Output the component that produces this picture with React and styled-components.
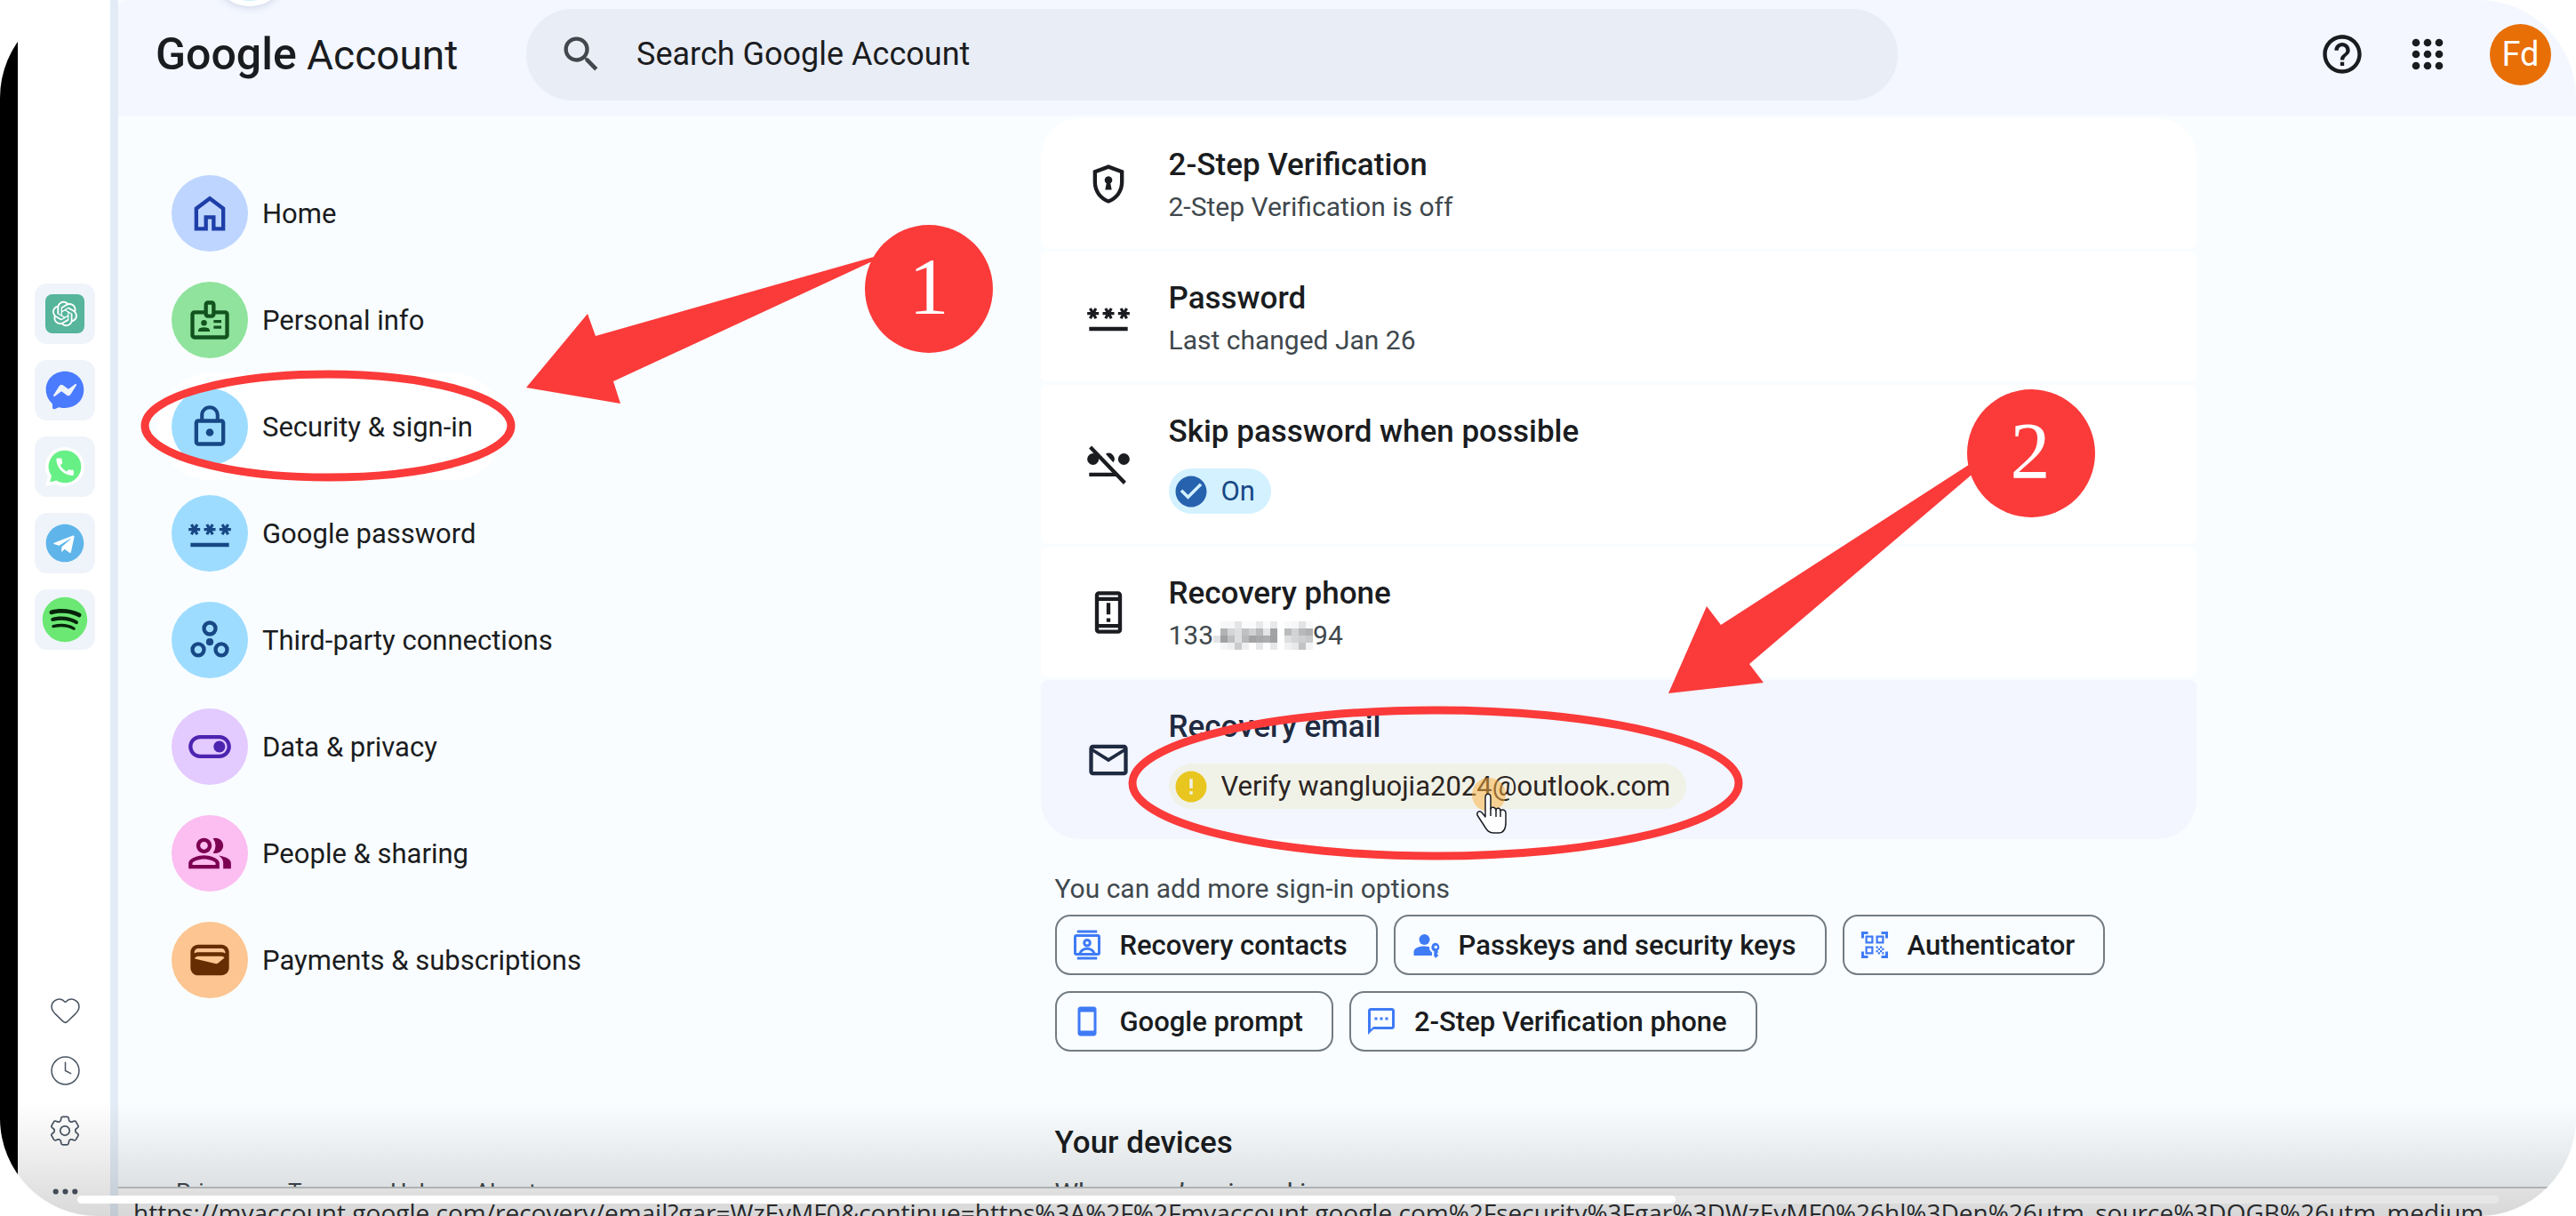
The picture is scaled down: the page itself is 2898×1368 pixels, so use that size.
import React from "react";
import styled, { createGlobalStyle } from "styled-components";
import {
  MdOutlineBadge,
  MdLockOutline,
  MdPassword,
  MdOutlineToggleOn,
  MdOutlinePeopleAlt,
  MdWallet,
  MdOutlineSecurityUpdateWarning,
  MdMailOutline,
  MdStayCurrentPortrait,
  MdOutlineTextsms,
  MdQrCodeScanner,
  MdHelpOutline,
  MdSearch,
  MdCheckCircle,
  MdError,
} from "react-icons/md";
import { RiOpenaiFill } from "react-icons/ri";
import { FaFacebookMessenger, FaTelegram, FaSpotify } from "react-icons/fa";
import { HiOutlineCog6Tooth } from "react-icons/hi2";
import { Heart, Clock4, Ellipsis } from "lucide-react";

/* icons that the packs do not have */

const WhatsAppIcon = () => (
  <svg viewBox="0 0 24 24">
    <path d="M12 0a12 12 0 0 1 0 24c-2 0-4-.5-5.700-1.400L0 24l1.600-6A12 12 0 0 1 12 0z" fill="#fff" />
    <path d="M12 2a10 10 0 0 1 0 20c-2 0-3.800-.5-5.300-1.500L2.800 21.500l1-3.800A10 10 0 0 1 12 2z" fill="#67f086" />
    <path
      d="M20.010 15.380c-1.230 0-2.420-.2-3.530-.56-.35-.12-.74-.03-1.010.24l-1.570 1.970c-2.830-1.350-5.480-3.900-6.890-6.830l1.950-1.660c.27-.28.35-.67.24-1.020-.37-1.110-.56-2.300-.56-3.530 0-.54-.45-.99-.99-.99H4.190C3.650 3 3 3.240 3 3.990 3 13.280 10.730 21 20.010 21c.71 0 .99-.63.99-1.180v-3.450c0-.54-.45-.99-.99-.99z"
      fill="#fff"
      transform="translate(5 5) scale(0.590)"
    />
  </svg>
);

const HomeIcon = () => (
  <svg viewBox="0 0 24 24" fill="currentColor">
    <path d="M6 19h3v-6h6v6h3v-9l-6-4.5L6 10v9zm-2 2V9l8-6 8 6v12h-7v-6h-2v6H4z" />
  </svg>
);

const ConnectionsIcon = () => (
  <svg viewBox="0 0 24 24" fill="none" stroke="currentColor" strokeWidth="2">
    <circle cx="12" cy="6" r="3" />
    <circle cx="6" cy="17" r="3" />
    <circle cx="18" cy="17" r="3" />
    <circle cx="12" cy="13" r="1.9" fill="currentColor" stroke="none" />
  </svg>
);

const ShieldKeyIcon = () => (
  <svg viewBox="0 0 24 24" fill="currentColor">
    <path d="M12 2 4 5v6.1c0 5 3.4 9.7 8 10.9 4.600-1.200 8-5.900 8-10.900V5l-8-3zm6 9.100c0 4-2.550 7.700-6 8.830-3.450-1.130-6-4.820-6-8.830V6.390l6-2.250 6 2.250v4.710z" />
    <path d="M10.300 15h3.400l-.65-3.300a2 2 0 1 0-2.100 0L10.300 15z" />
  </svg>
);

const SkipPasswordIcon = () => (
  <svg viewBox="0 0 24 24" fill="currentColor">
    <circle cx="4" cy="9" r="3" />
    <circle cx="20" cy="9" r="3" />
    <path d="M10.600 6.300A3 3 0 0 1 14.500 10.700z" />
    <path d="M2 16h12.600l2 2H2z" />
    <path d="m1.900 3.500 1.400-1.400 17.900 18.600-1.400 1.400z" />
  </svg>
);

const ContactsIcon = () => (
  <svg viewBox="0 0 24 24" fill="none" stroke="currentColor" strokeWidth="2">
    <path d="M4.500 2h15M4.500 22h15" />
    <rect x="3" y="5" width="18" height="14" rx="1" />
    <circle cx="12" cy="10.500" r="2.200" />
    <path d="M6.500 18.500c1-2.600 3.200-3.700 5.500-3.700s4.500 1.100 5.500 3.700" />
  </svg>
);

const PasskeyIcon = () => (
  <svg viewBox="0 0 24 24" fill="currentColor">
    <circle cx="11" cy="8" r="4" />
    <path d="M3 20v-2.800c0-3 4.500-4.200 8-4.200 1.300 0 2.600.2 3.700.5-.2 1.800.6 3.300 2 4.100V20z" />
    <path
      fillRule="evenodd"
      d="M19.500 10.500a3.300 3.300 0 0 0-1.300 6.300V20.500l1.300 1.300 2-2-1.200-1.300 1.200-1.200-.8-.8a3.300 3.300 0 0 0-1.200-6zm0 2a1.200 1.200 0 1 1 0 2.400 1.200 1.200 0 0 1 0-2.400z"
    />
  </svg>
);

const AppsIcon = () => (
  <svg viewBox="0 0 24 24" fill="currentColor">
    {[6, 12, 18].map((cy) =>
      [6, 12, 18].map((cx) => <circle key={cx + "-" + cy} cx={cx} cy={cy} r="2" />)
    )}
  </svg>
);

const rail = [
  { name: "ChatGPT", kind: "square", bg: "#56b59a", color: "#fff", icon: <RiOpenaiFill /> },
  { name: "Messenger", kind: "plain", color: "#4a7bff", icon: <FaFacebookMessenger /> },
  { name: "WhatsApp", kind: "plain", color: "#67f086", icon: <WhatsAppIcon /> },
  { name: "Telegram", kind: "disc", color: "#5fb5ea", under: "#fff", icon: <FaTelegram /> },
  { name: "Spotify", kind: "disc", color: "#6be873", under: "#06240a", large: true, icon: <FaSpotify /> },
];

const navItems = [
  { label: "Home", bg: "#bed5ff", color: "#1e3ea8", icon: <HomeIcon /> },
  { label: "Personal info", bg: "#8fe39c", color: "#12521f", icon: <MdOutlineBadge /> },
  { label: "Security & sign-in", bg: "#9edcff", color: "#174885", icon: <MdLockOutline />, active: true },
  { label: "Google password", bg: "#9edcff", color: "#174885", icon: <MdPassword /> },
  { label: "Third-party connections", bg: "#9edcff", color: "#174885", icon: <ConnectionsIcon /> },
  { label: "Data & privacy", bg: "#e3caff", color: "#4c24b0", icon: <MdOutlineToggleOn /> },
  { label: "People & sharing", bg: "#fcbdf0", color: "#7c0052", icon: <MdOutlinePeopleAlt /> },
  { label: "Payments & subscriptions", bg: "#fcc591", color: "#662d02", icon: <MdWallet /> },
];

const options = [
  { label: "Recovery contacts", icon: <ContactsIcon /> },
  { label: "Passkeys and security keys", icon: <PasskeyIcon /> },
  { label: "Authenticator", icon: <MdQrCodeScanner /> },
  { label: "Google prompt", icon: <MdStayCurrentPortrait /> },
  { label: "2-Step Verification phone", icon: <MdOutlineTextsms /> },
];

// grey levels of the blurred digits, one row per line of blocks, 0 is empty
const blocks = [
  [0, 246, 246, 228, 250, 250, 232, 250, 232, 0, 248, 246, 226, 248],
  [0, 178, 212, 222, 192, 208, 184, 228, 162, 0, 186, 210, 184, 176],
  [226, 160, 190, 222, 184, 162, 168, 172, 160, 0, 222, 212, 206, 200],
  [0, 244, 238, 202, 238, 0, 230, 0, 230, 0, 240, 232, 194, 242],
];

const statusUrl =
  "https://myaccount.google.com/recovery/email?gar=WzEyMF0&continue=https%3A%2F%2Fmyaccount.google.com%2Fsecurity%3Fgar%3DWzEyMF0%26hl%3Den%26utm_source%3DOGB%26utm_medium";

const HiddenDigits = () => (
  <svg width="112" height="32" viewBox="0 0 14 4" shapeRendering="crispEdges">
    {blocks.map((row, y) =>
      row.map((g, x) =>
        g ? (
          <rect key={x + "-" + y} x={x} y={y} width="1" height="1" fill={`rgb(${g},${g + 1},${g + 2})`} />
        ) : null
      )
    )}
  </svg>
);

const Annotations = () => (
  <Overlay width="2898" height="1368" viewBox="0 0 2898 1368">
    <g fill="none" stroke="#fb3a3a" strokeWidth="9">
      <ellipse cx="369" cy="479" rx="206" ry="58" />
      <ellipse cx="1615" cy="881" rx="341" ry="82" />
    </g>
    <g fill="#fb3a3a">
      <path d="M592 436 661 353 670 378 990 287 990 290 690 429 698 454z" />
      <circle cx="1045" cy="325" r="72" />
      <path d="M1877 780 1920 682 1936 703 2224 517 2224 529 1968 747 1984 768z" />
      <circle cx="2285" cy="510" r="72" />
    </g>
    <g fill="#fff" fontFamily="'Liberation Serif', serif" fontSize="90" textAnchor="middle">
      <text x="1045" y="353">1</text>
      <text x="2284" y="538">2</text>
    </g>
    <circle cx="1675" cy="894" r="19" fill="#fbb040" fillOpacity="0.5" />
    <path
      d="M1671 897c0-5 6-5 6 0v13c1-3 5-2 6 1 1-3 5-2 5 1 2-2 6-1 6 3v10c0 6-2 12-8 12h-6c-5 0-7-3-9-6-3-5-6-9-9-14-1-3 2-6 5-3l4 5z"
      fill="#fff"
      stroke="#1c1f26"
      strokeWidth="1.500"
      strokeLinejoin="round"
    />
    <path d="M1677 909v9M1683 911v8M1688 912v7" stroke="#1c1f26" strokeWidth="1.500" />
  </Overlay>
);

const App = () => {
  return (
    <>
      <GlobalStyle />
      <Screen>
        <Frame />
        <Rail>
          <RailGroup>
            {rail.map((item) => (
              <RailTile key={item.name} aria-label={item.name}>
                <BrandMark $kind={item.kind} $bg={item.bg} $color={item.color} $under={item.under} $large={item.large}>
                  {item.icon}
                </BrandMark>
              </RailTile>
            ))}
          </RailGroup>
          <RailTools>
            <RailTool aria-label="Favourites"><Heart /></RailTool>
            <RailTool aria-label="History"><Clock4 /></RailTool>
            <RailTool aria-label="Settings" $large><HiOutlineCog6Tooth /></RailTool>
            <RailTool aria-label="More" $bold><Ellipsis /></RailTool>
          </RailTools>
        </Rail>
        <Page>
          <TopBar>
            <PeekCircle />
            <Logo href="#">
              <b>Google</b> <span>Account</span>
            </Logo>
            <Search>
              <MdSearch />
              <input type="search" aria-label="Search Google Account" placeholder="Search Google Account" />
            </Search>
            <TopActions>
              <IconButton aria-label="Help"><MdHelpOutline /></IconButton>
              <IconButton aria-label="Google apps"><AppsIcon /></IconButton>
              <Avatar>Fd</Avatar>
            </TopActions>
          </TopBar>
          <Body>
            <Sidebar>
              <Nav>
                {navItems.map((item) => (
                  <NavItem key={item.label} href="#" $active={item.active}>
                    <NavIcon $bg={item.bg} $color={item.color}>{item.icon}</NavIcon>
                    {item.label}
                  </NavItem>
                ))}
              </Nav>
              <FooterLinks>
                <a href="#">Privacy</a>
                <a href="#">Terms</a>
                <a href="#">Help</a>
                <a href="#">About</a>
              </FooterLinks>
            </Sidebar>
            <Main>
              <Column>
                <Cards>
                  <Card>
                    <ShieldKeyIcon />
                    <div>
                      <CardTitle>2-Step Verification</CardTitle>
                      <CardText>2-Step Verification is off</CardText>
                    </div>
                  </Card>
                  <Card>
                    <MdPassword />
                    <div>
                      <CardTitle>Password</CardTitle>
                      <CardText>Last changed Jan 26</CardText>
                    </div>
                  </Card>
                  <Card>
                    <SkipPasswordIcon />
                    <div>
                      <CardTitle>Skip password when possible</CardTitle>
                      <Chip $tone="on">
                        <MdCheckCircle />
                        On
                      </Chip>
                    </div>
                  </Card>
                  <Card>
                    <MdOutlineSecurityUpdateWarning />
                    <div>
                      <CardTitle>Recovery phone</CardTitle>
                      <CardText>
                        133
                        <HiddenDigits />
                        94
                      </CardText>
                    </div>
                  </Card>
                  <Card $hover>
                    <MdMailOutline />
                    <div>
                      <CardTitle>Recovery email</CardTitle>
                      <Chip $tone="warn">
                        <MdError />
                        Verify wangluojia2024@outlook.com
                      </Chip>
                    </div>
                  </Card>
                </Cards>
                <MoreOptions>
                  <p>You can add more sign-in options</p>
                  <OptionList>
                    {options.map((o) => (
                      <OptionButton key={o.label}>
                        {o.icon}
                        {o.label}
                      </OptionButton>
                    ))}
                  </OptionList>
                </MoreOptions>
                <Devices>
                  <h2>Your devices</h2>
                  <p>Where you’re signed in</p>
                </Devices>
              </Column>
            </Main>
          </Body>
          <StatusBar>{statusUrl}</StatusBar>
        </Page>
        <Shade />
        <Progress>
          <span />
        </Progress>
        <Annotations />
      </Screen>
    </>
  );
};

const GlobalStyle = createGlobalStyle`
  * {
    box-sizing: border-box;
  }

  body {
    margin: 0;
    background: #fff;
    font-family: Roboto, "Liberation Sans", sans-serif;
    color: #1a1c20;
  }

  button {
    border: 0;
    padding: 0;
    background: none;
    font: inherit;
    color: inherit;
  }

  a {
    color: inherit;
    text-decoration: none;
  }

  h2, h3, p {
    margin: 0;
  }
`;

const Screen = styled.div`
  position: relative;
  display: flex;
  height: 100vh;
  overflow: hidden;
  border-radius: 110px;
`;

const Frame = styled.div`
  flex: 0 0 20px;
  background: #000;
`;

const Rail = styled.aside`
  flex: 0 0 113px;
  display: flex;
  flex-direction: column;
  justify-content: space-between;
  align-items: center;
  padding: 319px 0 10px 2px;
  background: #fff;
  border-right: 9px solid #e3ecf6;
`;

const RailGroup = styled.div`
  display: flex;
  flex-direction: column;
  gap: 18px;
`;

const RailTile = styled.button`
  display: flex;
  align-items: center;
  justify-content: center;
  width: 68px;
  height: 68px;
  border-radius: 14px;
  background: #eff4fa;
`;

const BrandMark = styled.span`
  display: flex;
  align-items: center;
  justify-content: center;
  width: ${({ $large }) => ($large ? 52 : 44)}px;
  height: ${({ $large }) => ($large ? 52 : 44)}px;
  border-radius: ${({ $kind }) => ($kind === "square" ? "8px" : "50%")};
  color: ${({ $color }) => $color};
  background: ${({ $kind, $bg, $under }) =>
    $kind === "disc" ? `radial-gradient(${$under} 60%, transparent 62%)` : $bg || "transparent"};

  svg {
    width: ${({ $kind }) => ($kind === "square" ? "34px" : "100%")};
    height: ${({ $kind }) => ($kind === "square" ? "34px" : "100%")};
  }
`;

const RailTools = styled.div`
  display: flex;
  flex-direction: column;
  gap: 32px;
`;

const RailTool = styled.button`
  display: flex;
  align-items: center;
  justify-content: center;
  height: 36px;
  color: #4b5563;

  svg {
    flex: none;
    width: ${({ $large }) => ($large ? 42 : 37)}px;
    height: ${({ $large }) => ($large ? 42 : 37)}px;
    stroke-width: ${({ $bold }) => ($bold ? 2 : 1)};
  }
`;

const Page = styled.div`
  flex: 1;
  min-width: 0;
  display: flex;
  flex-direction: column;
  background: #f9fdff;
`;

const TopBar = styled.header`
  position: relative;
  flex: 0 0 130px;
  display: flex;
  align-items: center;
  padding: 0 28px 8px 42px;
  background: #f4f7ff;
  border-radius: 10px 0 0 0;
`;

/* bottom edge of the floating button above the page */
const PeekCircle = styled.div`
  position: absolute;
  top: -77px;
  left: 106px;
  width: 84px;
  height: 84px;
  border-radius: 50%;
  border: 6px solid #fff;
  background: #c9f3fb;
  box-shadow: 0 2px 8px rgba(60, 90, 140, 0.2);
`;

const Logo = styled.a`
  flex: 0 0 417px;
  font-size: 46px;

  b {
    font-size: 50px;
    font-weight: 500;
  }
`;

const Search = styled.label`
  flex: 0 1 1543px;
  display: flex;
  align-items: center;
  gap: 34px;
  height: 103px;
  padding: 0 36px;
  border-radius: 52px;
  background: #e9edf6;
  color: #40484d;

  svg {
    width: 52px;
    height: 52px;
  }

  input {
    flex: 1;
    border: 0;
    outline: 0;
    background: none;
    font: inherit;
    font-size: 36px;
  }

  input::placeholder {
    color: #1a1c20;
    opacity: 1;
  }
`;

const TopActions = styled.div`
  display: flex;
  align-items: center;
  gap: 44px;
  margin-left: auto;
`;

const IconButton = styled.button`
  height: 52px;

  svg {
    width: 52px;
    height: 52px;
  }
`;

const Avatar = styled.button`
  width: 69px;
  height: 69px;
  border-radius: 50%;
  background: #e86e06;
  color: #fff;
  font-size: 38px;
`;

const Body = styled.div`
  flex: 1;
  min-height: 0;
  display: flex;
  overflow: hidden;
`;

const Sidebar = styled.div`
  flex: 0 0 610px;
  padding: 50px 0 0 44px;
`;

const Nav = styled.nav`
  display: flex;
  flex-direction: column;
  align-items: flex-start;
`;

const NavItem = styled.a`
  display: flex;
  align-items: center;
  gap: 16px;
  height: 120px;
  padding: 0 36px 0 16px;
  border-radius: 60px;
  background: ${({ $active }) => ($active ? "#fff" : "transparent")};
  font-size: 31px;
  font-weight: 450;
`;

const NavIcon = styled.span`
  display: flex;
  align-items: center;
  justify-content: center;
  width: 86px;
  height: 86px;
  border-radius: 50%;
  background: ${({ $bg }) => $bg};
  color: ${({ $color }) => $color};

  svg {
    width: 52px;
    height: 52px;
  }
`;

const FooterLinks = styled.div`
  display: flex;
  gap: 42px;
  padding: 183px 0 0 21px;
  font-size: 26px;
  line-height: 36px;
  color: #40484d;
`;

const Main = styled.main`
  flex: 1;
  min-width: 0;
  display: flex;
  justify-content: center;
  align-items: flex-start;
  padding-top: 3px;
`;

const Column = styled.div`
  width: 100%;
  max-width: 1300px;
`;

const Cards = styled.div`
  display: flex;
  flex-direction: column;
  gap: 3px;
  overflow: hidden;
  border-radius: 44px;
`;

const Card = styled.section`
  display: flex;
  align-items: center;
  gap: 42px;
  padding: 26px 50px;
  border-radius: 8px;
  background: ${({ $hover }) => ($hover ? "#f3f5ff" : "#fff")};
  color: ${({ $hover }) => ($hover ? "#1f2a40" : "#1a1c20")};

  > svg {
    flex: none;
    width: 52px;
    height: 52px;
  }
`;

const CardTitle = styled.h3`
  font-size: 35px;
  font-weight: 500;
  line-height: 54px;
`;

const CardText = styled.p`
  display: flex;
  align-items: center;
  height: 39px;
  margin-bottom: 2px;
  font-size: 30px;
  line-height: 39px;
  color: #40484d;
`;

const Chip = styled.button`
  display: flex;
  align-items: center;
  gap: 13px;
  height: 51px;
  margin: 14px 0 8px;
  padding: 0 18px 0 4px;
  border-radius: 26px;
  background: ${({ $tone }) => ($tone === "on" ? "#d3f1ff" : "#f0f2e7")};
  color: ${({ $tone }) => ($tone === "on" ? "#174885" : "#2b2422")};
  font-size: 31px;
  font-weight: 450;

  svg {
    width: 42px;
    height: 42px;
    color: ${({ $tone }) => ($tone === "on" ? "#2762ae" : "#e8c61f")};
  }
`;

const MoreOptions = styled.section`
  padding: 34px 16px 0;
  font-size: 31px;

  p {
    font-size: 30px;
    line-height: 43px;
    color: #40484d;
  }
`;

const OptionList = styled.div`
  display: flex;
  flex-wrap: wrap;
  gap: 18px;
  margin-top: 8px;
`;

const OptionButton = styled.button`
  display: flex;
  align-items: center;
  gap: 19px;
  height: 68px;
  padding: 0 32px 0 16px;
  border: 2px solid #737b82;
  border-radius: 17px;
  font-weight: 500;

  svg {
    width: 36px;
    height: 36px;
    color: #3f7bf5;
  }
`;

const Devices = styled.section`
  padding: 76px 16px 0;

  h2 {
    font-size: 35px;
    font-weight: 500;
    line-height: 54px;
  }

  p {
    margin-top: 7px;
    font-size: 30px;
    line-height: 43px;
    color: #40484d;
  }
`;

const StatusBar = styled.footer`
  flex: 0 0 33px;
  height: 33px;
  overflow: hidden;
  padding: 12px 0 0 17px;
  border-top: 2px solid #c3c8cc;
  background: #fdfdfd;
  font-family: "Open Sans", sans-serif;
  font-size: 28px;
  line-height: 30px;
  white-space: nowrap;
  color: #2f3033;
`;

const Shade = styled.div`
  position: absolute;
  left: 0;
  right: 0;
  bottom: 0;
  height: 128px;
  background: linear-gradient(rgba(0, 0, 0, 0), rgba(0, 0, 0, 0.15));
  pointer-events: none;
`;

const Progress = styled.div`
  position: absolute;
  left: 87px;
  right: 87px;
  bottom: 14px;
  height: 9px;
  border-radius: 5px;
  background: rgba(255, 255, 255, 0.3);

  span {
    display: block;
    width: 66%;
    height: 100%;
    border-radius: 5px;
    background: #fff;
  }
`;

const Overlay = styled.svg`
  position: absolute;
  top: 0;
  left: 0;
  pointer-events: none;
`;

export default App;
